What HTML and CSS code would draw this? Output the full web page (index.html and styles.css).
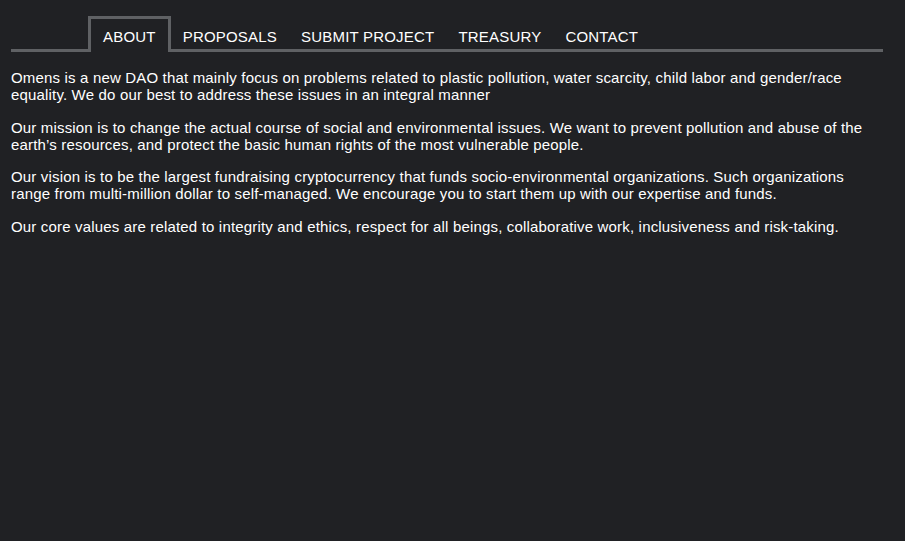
FILE: index.html
```html
<!DOCTYPE html>
<html>
<head>
<meta charset="utf-8">
<link rel="stylesheet" href="styles.css">
</head>
<body>
<div class="page">
  <ul class="tabs">
    <li class="tab active">ABOUT</li>
    <li class="tab">PROPOSALS</li>
    <li class="tab">SUBMIT PROJECT</li>
    <li class="tab">TREASURY</li>
    <li class="tab">CONTACT</li>
  </ul>
  <div class="panel">
    <p>Omens is a new DAO that mainly focus on problems related to plastic pollution, water scarcity, child labor and gender/race equality. We do our best to address these issues in an integral manner</p>
    <p>Our mission is to change the actual course of social and environmental issues. We want to prevent pollution and abuse of the earth’s resources, and protect the basic human rights of the most vulnerable people.</p>
    <p>Our vision is to be the largest fundraising cryptocurrency that funds socio-environmental organizations. Such organizations range from multi-million dollar to self-managed. We encourage you to start them up with our expertise and funds.</p>
    <p>Our core values are related to integrity and ethics, respect for all beings, collaborative work, inclusiveness and risk-taking.</p>
  </div>
</div>
</body>
</html>
```
FILE: styles.css
```css
html, body {
  margin: 0;
  background: #202124;
}
body {
  font-family: "Liberation Sans", Arial, sans-serif;
  font-size: 15px;
  color: #ffffff;
}
.page {
  padding: 16px 22px 0 11px;
}
.tabs {
  list-style: none;
  margin: 0;
  padding: 0 0 0 77px;
  display: flex;
  align-items: flex-end;
  border-bottom: 3px solid #5f6164;
  letter-spacing: 0.2px;
}
.tab {
  padding: 9px 12px 4px;
  border-top: 3px solid transparent;
  position: relative;
}
.tab.active {
  border: 3px solid #5f6164;
  border-bottom: none;
  background: #202124;
  margin-bottom: -3px;
  padding-bottom: 7px;
}
.panel {
  padding: 2px 15px 0 0;
  letter-spacing: 0.17px;
}
.panel p {
  margin: 15px 0;
  line-height: 17.25px;
}
```
